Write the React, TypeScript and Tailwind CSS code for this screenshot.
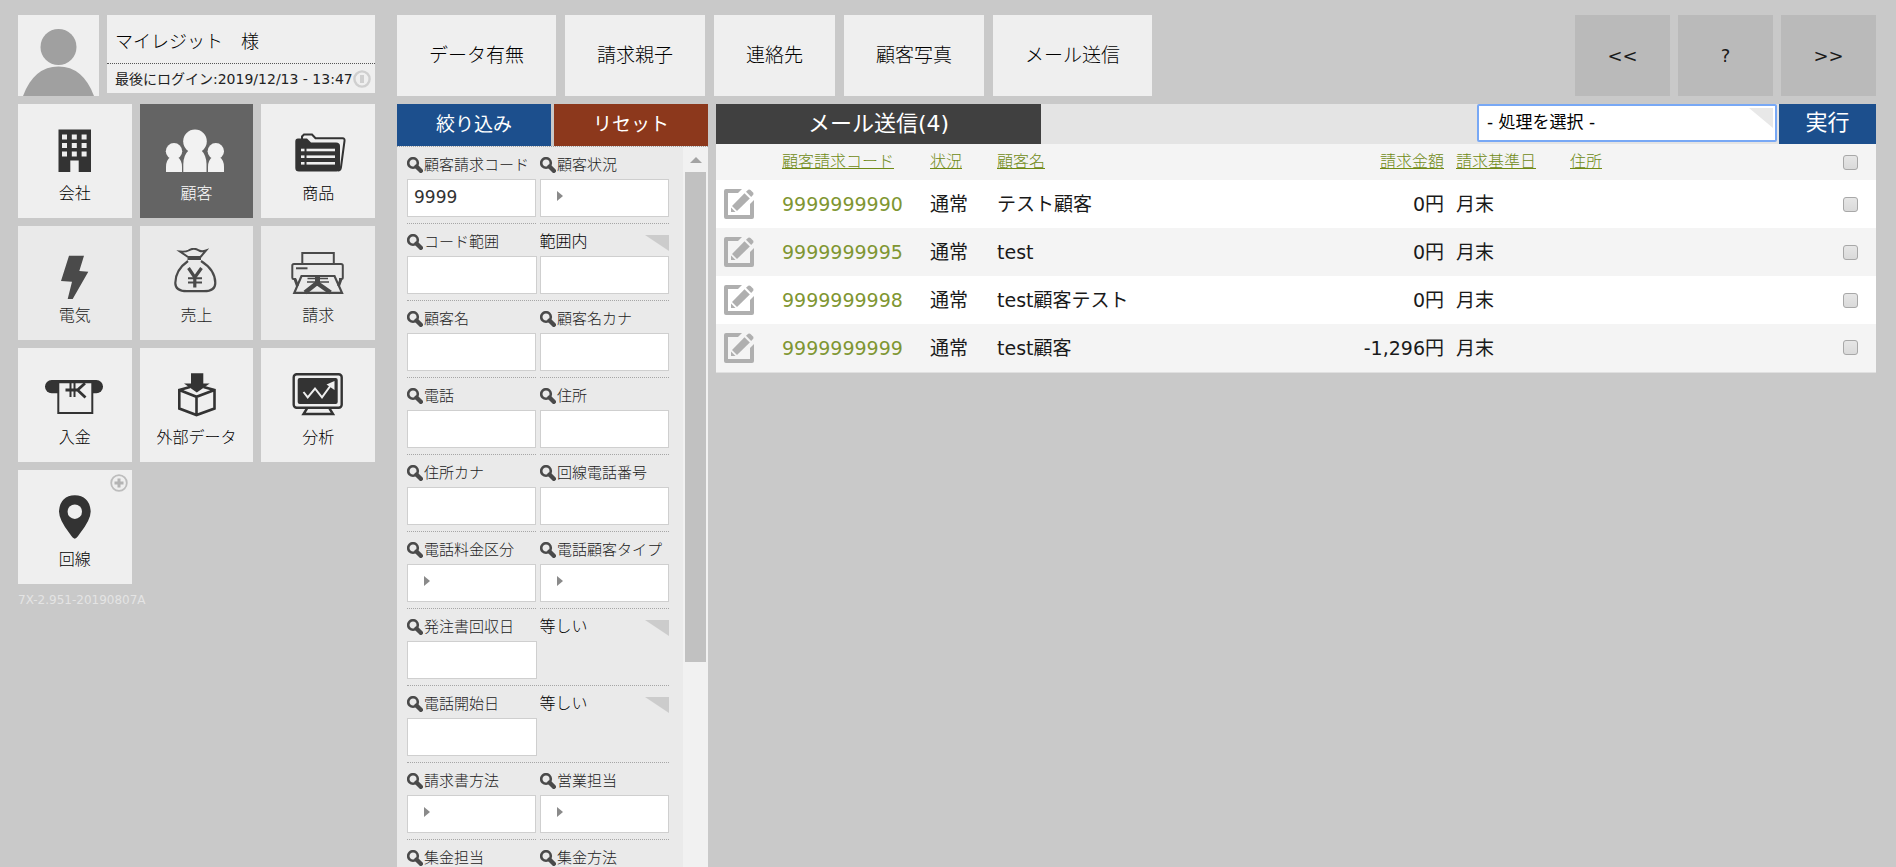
import React from 'react';

type Field = { label: string; kind: 'text' | 'picker'; value?: string };
type FilterRow = { fields: Field[]; condition?: string; second?: boolean };

const SearchIcon: React.FC = () => (
    <svg viewBox="0 0 16 16" className="h-4 w-4 flex-shrink-0" aria-hidden="true">
        <circle cx="6" cy="6" r="4.8" fill="none" stroke="#4a4a4a" strokeWidth="2.6" />
        <path d="M9.5 9.5L13.8 13.8" stroke="#4a4a4a" strokeWidth="4.4" strokeLinecap="round" />
    </svg>
);

const EditIcon: React.FC = () => (
    <svg viewBox="0 0 30 30" className="h-[30px] w-[30px]" fill="#afafaf" aria-hidden="true">
        <path d="M2 0H18L14 4H4V26H26V15L30 11V28Q30 30 28 30H2Q0 30 0 28V2Q0 0 2 0Z" />
        <path d="M20.5 4.2L25.8 9.5L13 22L8 17Z" />
        <path d="M7 18.5L11.5 23H7Z" />
        <path d="M22 2.8L24.2 0.8Q25.4 0 26.5 1L29 3.5Q30 4.7 29.2 5.8L27.2 8Z" />
    </svg>
);

const CornerMark: React.FC<{ className: string }> = ({ className }) => (
    <svg viewBox="0 0 24 16" preserveAspectRatio="none" className={className} aria-hidden="true">
        <path d="M0 0H24V16Z" fill="currentColor" />
    </svg>
);

const BuildingArt = () => (
    <>
        <path d="M19.5 3.5H52V46H39.7V34.5H31.3V46H19.5Z" fill="#333" />
        {[8.5, 17, 25.5].map(y => [23, 32.8, 42.6].map(x => (
            <rect key={`${x}-${y}`} x={x} y={y} width="5" height="5" fill="#efefef" />
        )))}
    </>
);

const PeopleArt = () => (
    <g fill="#f2f2f2">
        <circle cx="14" cy="25.2" r="8.2" />
        <circle cx="55.8" cy="25.2" r="8.2" />
        <path d="M6 46V41Q6 34 10.5 31H17.5Q22 34 22 41V46Z" />
        <path d="M48 46V41Q48 34 52.5 31H59.5Q64 34 64 41V46Z" />
        <circle cx="35" cy="15.3" r="11.8" />
        <path d="M23.3 46V38Q23.5 29 29 24H41Q46.3 29 46.5 38V46Z" />
    </g>
);

const FolderArt = () => (
    <>
        <path d="M20 14V10.5L22 8.5H30L33.5 12.3H60.5Q63 12.3 62.5 15L59 41Q58.5 44.5 56 44.5" fill="none" stroke="#333" strokeWidth="2" />
        <path d="M16 12.5H25L29 16.5H54Q58 16.5 58 20V42Q58 45.5 54.5 45.5H17Q13.3 45.5 13.3 42V15.5Q13.3 12.5 16 12.5Z" fill="#333" />
        {[24, 30.7, 37.3].map(y => (
            <g key={y} stroke="#efefef" strokeWidth="2.6">
                <path d={`M19 ${y}H22.5`} />
                <path d={`M24.5 ${y}H53`} />
            </g>
        ))}
    </>
);

const BoltArt = () => (
    <path d="M30 7.7H45L40.3 23L49.3 23.7L33.7 51H28.7L33 33.7L22 33Z" fill="#4a4a4a" />
);

const MoneyBagArt = () => (
    <g fill="none" stroke="#4a4a4a" strokeWidth="2">
        <path d="M28 9L20 3.5Q26 4 28.5 2.5Q34 -1 39 2.5Q42 4 46 2.5L40.5 9" />
        <path d="M27.5 10H41" strokeWidth="4" />
        <path d="M28 13Q15.3 22 15.3 35Q15.3 43.2 27 43.2H44Q55.3 43.2 55.3 35Q55.3 22 41 13" strokeWidth="2.2" />
        <path d="M28.5 20L34.8 29.5L41.5 20M34.8 29.5V39.5" strokeWidth="3.2" />
        <path d="M28 30.2H42M28 34.5H42" strokeWidth="2" />
    </g>
);

const PrinterArt = () => (
    <g fill="none" stroke="#4a4a4a" strokeWidth="2">
        <path d="M20.3 15V5H51.8V15" />
        <path d="M14 31H11.5Q10.3 31 10.3 29.5V17.5Q10.3 16 12 16H59Q60.8 16 60.8 17.5V29.5Q60.8 31 59.3 31H57" />
        <path d="M14 20.3H25.5" />
        <path d="M19.5 28H52.5L60 44.8H12.3Z" strokeWidth="2.2" />
        <path d="M13 31L15.5 38M59 31L56.5 38" strokeWidth="3" />
        <path d="M23 44.5L35 35L48.5 44.5" strokeWidth="4.5" />
        <path d="M35.5 28V36" strokeWidth="5" />
        <path d="M25.5 30.5H46M25 34H47" strokeWidth="1.5" />
    </g>
);

const DepositArt = () => (
    <>
        <rect x="6" y="10" width="58" height="13.3" rx="6.6" fill="#333" />
        <path d="M19.3 12.3H53.3V43H19.3Z" fill="#efefef" stroke="#333" strokeWidth="2" />
        <g fill="none" stroke="#333">
            <path d="M26.5 20H38.5L46 13.2M38.5 20L46.5 27.5" strokeWidth="2.8" />
            <path d="M31.5 12.5V27M35.5 12.5V27" strokeWidth="2" />
        </g>
    </>
);

const ImportArt = () => (
    <>
        <path d="M30 17L19.3 20V38.5L36.5 45L54.5 38.5V20L43.5 17M19.3 20L36.5 26.8L54.5 20M36.5 26.8V45" fill="none" stroke="#333" strokeWidth="2.6" />
        <path d="M31 3.3H43.3V13.5H49.7L36.8 22.5L24 13.5H31Z" fill="#333" />
    </>
);

const MonitorArt = () => (
    <>
        <rect x="11.7" y="4.3" width="48" height="33.5" rx="3" fill="none" stroke="#333" strokeWidth="2.4" />
        <rect x="15.7" y="8" width="40" height="26" rx="2" fill="#333" />
        <path d="M25 38.5L21.5 44H51L47.5 38.5" fill="none" stroke="#333" strokeWidth="2.4" />
        <path d="M21.5 22L25.7 27.3L33 18.5L40 27.3L49 15" fill="none" stroke="#efefef" strokeWidth="2" />
        <path d="M52.5 11V20L44.5 14.5Z" fill="#efefef" />
    </>
);

const PinArt = () => (
    <>
        <path d="M35.8 46.7Q34 46.5 31 42Q20 28 20 19.5Q21 3.8 35.8 3.3Q50.6 3.8 51.7 19.5Q51.7 28 40.5 42Q37.5 46.5 35.8 46.7Z" fill="#333" />
        <circle cx="35.8" cy="19.7" r="7.2" fill="#efefef" />
    </>
);

const menu = [
    { label: '会社', art: <BuildingArt />, tone: 'bg-[#efefef] text-black' },
    { label: '顧客', art: <PeopleArt />, tone: 'bg-[#646464] text-white' },
    { label: '商品', art: <FolderArt />, tone: 'bg-[#efefef] text-black' },
    { label: '電気', art: <BoltArt />, tone: 'bg-[#eaeaea] text-[#222222]' },
    { label: '売上', art: <MoneyBagArt />, tone: 'bg-[#eaeaea] text-[#222222]' },
    { label: '請求', art: <PrinterArt />, tone: 'bg-[#eaeaea] text-[#222222]' },
    { label: '入金', art: <DepositArt />, tone: 'bg-[#efefef] text-black' },
    { label: '外部データ', art: <ImportArt />, tone: 'bg-[#efefef] text-black' },
    { label: '分析', art: <MonitorArt />, tone: 'bg-[#efefef] text-black' },
    { label: '回線', art: <PinArt />, tone: 'bg-[#efefef] text-black', add: true },
];

const tabs = ['データ有無', '請求親子', '連絡先', '顧客写真', 'メール送信'];

const filterRows: FilterRow[] = [
    { fields: [{ label: '顧客請求コード', kind: 'text', value: '9999' }, { label: '顧客状況', kind: 'picker' }] },
    { fields: [{ label: 'コード範囲', kind: 'text' }], condition: '範囲内', second: true },
    { fields: [{ label: '顧客名', kind: 'text' }, { label: '顧客名カナ', kind: 'text' }] },
    { fields: [{ label: '電話', kind: 'text' }, { label: '住所', kind: 'text' }] },
    { fields: [{ label: '住所カナ', kind: 'text' }, { label: '回線電話番号', kind: 'text' }] },
    { fields: [{ label: '電話料金区分', kind: 'picker' }, { label: '電話顧客タイプ', kind: 'picker' }] },
    { fields: [{ label: '発注書回収日', kind: 'text' }], condition: '等しい' },
    { fields: [{ label: '電話開始日', kind: 'text' }], condition: '等しい' },
    { fields: [{ label: '請求書方法', kind: 'picker' }, { label: '営業担当', kind: 'picker' }] },
    { fields: [{ label: '集金担当', kind: 'picker' }, { label: '集金方法', kind: 'picker' }] },
];

const customers = [
    { code: '9999999990', status: '通常', name: 'テスト顧客', amount: '0円', day: '月末' },
    { code: '9999999995', status: '通常', name: 'test', amount: '0円', day: '月末' },
    { code: '9999999998', status: '通常', name: 'test顧客テスト', amount: '0円', day: '月末' },
    { code: '9999999999', status: '通常', name: 'test顧客', amount: '-1,296円', day: '月末' },
];

const boxStyle = 'block h-[38px] w-full border border-[#cfcfcf] bg-white';
const checkStyle = 'block mx-auto h-[15px] w-[15px] appearance-none rounded-[3px] border border-[#a8a8a8] bg-linear-to-b from-[#e6e6e6] to-[#dadada] checked:bg-[#1c4f8d]';

const FilterField: React.FC<{ field: Field }> = ({ field }) => (
    <div className="min-w-0">
        <label htmlFor={field.label} className="flex h-8 items-center gap-px pt-1 text-[15px] leading-6 whitespace-nowrap text-[#222222]">
            <SearchIcon />
            <span>{field.label}</span>
        </label>
        {field.kind === 'text' ? (
            <input id={field.label} type="text" defaultValue={field.value} className={`${boxStyle} px-1.5 pb-0.5 text-[17px] font-normal text-[#333333]`} />
        ) : (
            <button id={field.label} type="button" className={`${boxStyle} pb-1 pl-4`}>
                <svg viewBox="0 0 6 10" className="h-[10px] w-[6px]" aria-hidden="true">
                    <path d="M0 0L6 5L0 10Z" fill="#8a8a8a" />
                </svg>
            </button>
        )}
    </div>
);

const ConditionField: React.FC<{ row: FilterRow }> = ({ row }) => (
    <div className="min-w-0">
        <div className="relative h-8">
            <select aria-label={`${row.fields[0].label} 条件`} className="h-8 w-full appearance-none bg-transparent pt-1 text-base leading-6 text-black">
                <option>{row.condition}</option>
            </select>
            <CornerMark className="pointer-events-none absolute top-[11px] right-0 h-4 w-6 text-[#cccccc]" />
        </div>
        {row.second && <input type="text" aria-label={`${row.fields[0].label} 終了`} className={`${boxStyle} px-1.5 text-[17px]`} />}
    </div>
);

const Sidebar: React.FC = () => (
    <aside className="w-[357px] flex-shrink-0">
        <div className="mb-2 flex h-[81px] gap-2">
            <div className="w-[81px] flex-shrink-0 bg-[#efefef]">
                <svg viewBox="0 0 81 81" className="h-full w-full" aria-hidden="true">
                    <circle cx="40.5" cy="32" r="18" fill="#a0a0a0" />
                    <path d="M5 81Q16 51.5 40.5 51.5Q65 51.5 76 81Z" fill="#a0a0a0" />
                </svg>
            </div>
            <div className="mb-[3px] flex min-w-0 flex-1 flex-col bg-[#efefef] text-black">
                <p className="flex h-[49px] items-center border-b border-dotted border-[#555555] pt-1.5 pl-2 text-lg">マイレジット　様</p>
                <div className="flex flex-1 items-center justify-between pr-1.5 pl-2">
                    <p className="text-sm font-normal whitespace-nowrap text-[#222222]">最後にログイン:2019/12/13 - 13:47</p>
                    <button type="button" aria-label="ログアウト">
                        <svg viewBox="0 0 18 18" className="h-[18px] w-[18px]" aria-hidden="true">
                            <circle cx="9" cy="9" r="7.6" fill="none" stroke="#cfcfcf" strokeWidth="2.4" />
                            <path d="M9 5V13" stroke="#cfcfcf" strokeWidth="4" />
                        </svg>
                    </button>
                </div>
            </div>
        </div>
        <nav className="grid grid-cols-3 gap-2">
            {menu.map(item => (
                <a key={item.label} href="#" className={`relative flex h-[114px] flex-col items-center pt-[22px] ${item.tone}`}>
                    <svg viewBox="0 0 72 56" className="h-14 w-[72px]" aria-hidden="true">{item.art}</svg>
                    <span className="text-base leading-6">{item.label}</span>
                    {item.add && (
                        <svg viewBox="0 0 18 18" className="absolute top-1 right-1 h-[18px] w-[18px]" aria-hidden="true">
                            <circle cx="9" cy="9" r="7.8" fill="none" stroke="#bdbdbd" strokeWidth="1.8" />
                            <path d="M9 4.5V13.5M4.5 9H13.5" stroke="#b4b4b4" strokeWidth="3" />
                        </svg>
                    )}
                </a>
            ))}
        </nav>
        <p className="mt-2 text-xs leading-4 font-normal text-[#e4e4e4]">7X-2.951-20190807A</p>
    </aside>
);

const FilterPanel: React.FC = () => (
    <section className="flex w-[311px] flex-shrink-0 flex-col">
        <div className="flex h-[42px] flex-shrink-0 gap-[3px] text-[19px] font-normal text-white">
            <button type="button" className="flex-1 bg-[#1c4f8d] pb-0.5">絞り込み</button>
            <button type="button" className="flex-1 bg-[#8c381c] pb-0.5">リセット</button>
        </div>
        <div className="flex min-h-0 flex-1 overflow-hidden border-t border-dotted border-[#a6a6a6] bg-[#eaeaea]">
            <form className="min-w-0 flex-1 pr-[14px] pl-[10px]">
                {filterRows.map(row => (
                    <div key={row.fields[0].label} className={`grid grid-cols-2 ${row.condition ? 'gap-x-[3px] border-b border-dotted border-[#a6a6a6] pb-1.5' : 'gap-x-1'}`}>
                        {row.fields.map(field => (
                            <div key={field.label} className={row.condition ? '' : 'border-b border-dotted border-[#a6a6a6] pb-1.5'}>
                                <FilterField field={field} />
                            </div>
                        ))}
                        {row.condition && <ConditionField row={row} />}
                    </div>
                ))}
            </form>
            <div className="flex w-[25px] flex-col bg-[#f1f1f1] px-0.5" aria-hidden="true">
                <div className="flex h-[25px] flex-shrink-0 items-center justify-center">
                    <svg viewBox="0 0 12 6" className="h-1.5 w-3"><path d="M6 0L12 6H0Z" fill="#a3a3a3" /></svg>
                </div>
                <div className="h-[68%] bg-[#c1c1c1]" />
            </div>
        </div>
    </section>
);

const ResultPanel: React.FC = () => (
    <section className="min-w-0 flex-1">
        <div className="flex h-10 items-stretch bg-[#e4e4e4]">
            <h1 className="flex w-[325px] items-center justify-center bg-[#404040] pb-0.5 text-[22px] font-normal text-white">メール送信(4)</h1>
            <div className="relative mr-0.5 ml-auto w-[300px]">
                <select aria-label="処理" className="h-[38px] w-full appearance-none rounded-[2px] border-2 border-[#78a8f5] bg-white pl-2 text-[17px] font-normal text-black">
                    <option>- 処理を選択 -</option>
                </select>
                <CornerMark className="pointer-events-none absolute top-1 right-1 h-5 w-6 text-[#e8e8e8]" />
            </div>
            <button type="button" className="w-[97px] bg-[#1c4f8d] pb-0.5 text-[22px] leading-8 font-normal text-white">実行</button>
        </div>
        <table className="w-full table-fixed border-b border-[#e0e0e0] text-left text-[19px] text-black">
            <colgroup>
                <col className="w-[60px]" />
                <col className="w-[148px]" />
                <col className="w-[67px]" />
                <col className="w-[300px]" />
                <col className="w-[159px]" />
                <col className="w-[114px]" />
                <col />
                <col className="w-[52px]" />
            </colgroup>
            <thead>
                <tr className="h-9 bg-[#f4f4f4] text-base text-[#6f8a14]">
                    <th aria-label="編集" />
                    <th className="px-1.5 font-light"><a href="#" className="underline">顧客請求コード</a></th>
                    <th className="px-1.5 font-light"><a href="#" className="underline">状況</a></th>
                    <th className="px-1.5 font-light"><a href="#" className="underline">顧客名</a></th>
                    <th className="px-1.5 text-right font-light"><a href="#" className="underline">請求金額</a></th>
                    <th className="px-1.5 font-light"><a href="#" className="underline">請求基準日</a></th>
                    <th className="px-1.5 font-light"><a href="#" className="underline">住所</a></th>
                    <th><input type="checkbox" aria-label="すべて選択" className={checkStyle} /></th>
                </tr>
            </thead>
            <tbody className="font-normal text-[#1a1a1a]">
                {customers.map(c => (
                    <tr key={c.code} className="h-12 odd:bg-white even:bg-[#f4f4f4]">
                        <td className="pl-2"><button type="button" aria-label={`${c.code} 編集`} className="block"><EditIcon /></button></td>
                        <td className="px-1.5"><a href="#" className="text-[#7f9632]">{c.code}</a></td>
                        <td className="px-1.5">{c.status}</td>
                        <td className="px-1.5">{c.name}</td>
                        <td className="px-1.5 text-right">{c.amount}</td>
                        <td className="px-1.5">{c.day}</td>
                        <td className="px-1.5" />
                        <td><input type="checkbox" aria-label={`${c.code} 選択`} className={checkStyle} /></td>
                    </tr>
                ))}
            </tbody>
        </table>
    </section>
);

const App: React.FC = () => (
    <div className="flex h-screen gap-[22px] overflow-hidden bg-[#c9c9c9] pt-[15px] pr-5 pl-[18px] font-['DejaVu_Sans','Noto_Sans_CJK_JP',sans-serif] font-light">
        <Sidebar />
        <main className="flex min-w-0 flex-1 flex-col gap-2">
            <div className="flex h-[81px] flex-shrink-0 gap-[9px] text-[19px] text-black">
                {tabs.map(tab => (
                    <button key={tab} type="button" className="bg-[#efefef] px-8 whitespace-nowrap">{tab}</button>
                ))}
                <div className="ml-auto flex gap-2 font-normal text-[#1a1a1a]">
                    <button type="button" className="w-[95px] bg-[#bababa] text-lg">&lt;&lt;</button>
                    <button type="button" className="w-[95px] bg-[#bababa] text-lg">?</button>
                    <button type="button" className="w-[95px] bg-[#bababa] text-lg">&gt;&gt;</button>
                </div>
            </div>
            <div className="flex min-h-0 flex-1 gap-2">
                <FilterPanel />
                <ResultPanel />
            </div>
        </main>
    </div>
);

export default App;
